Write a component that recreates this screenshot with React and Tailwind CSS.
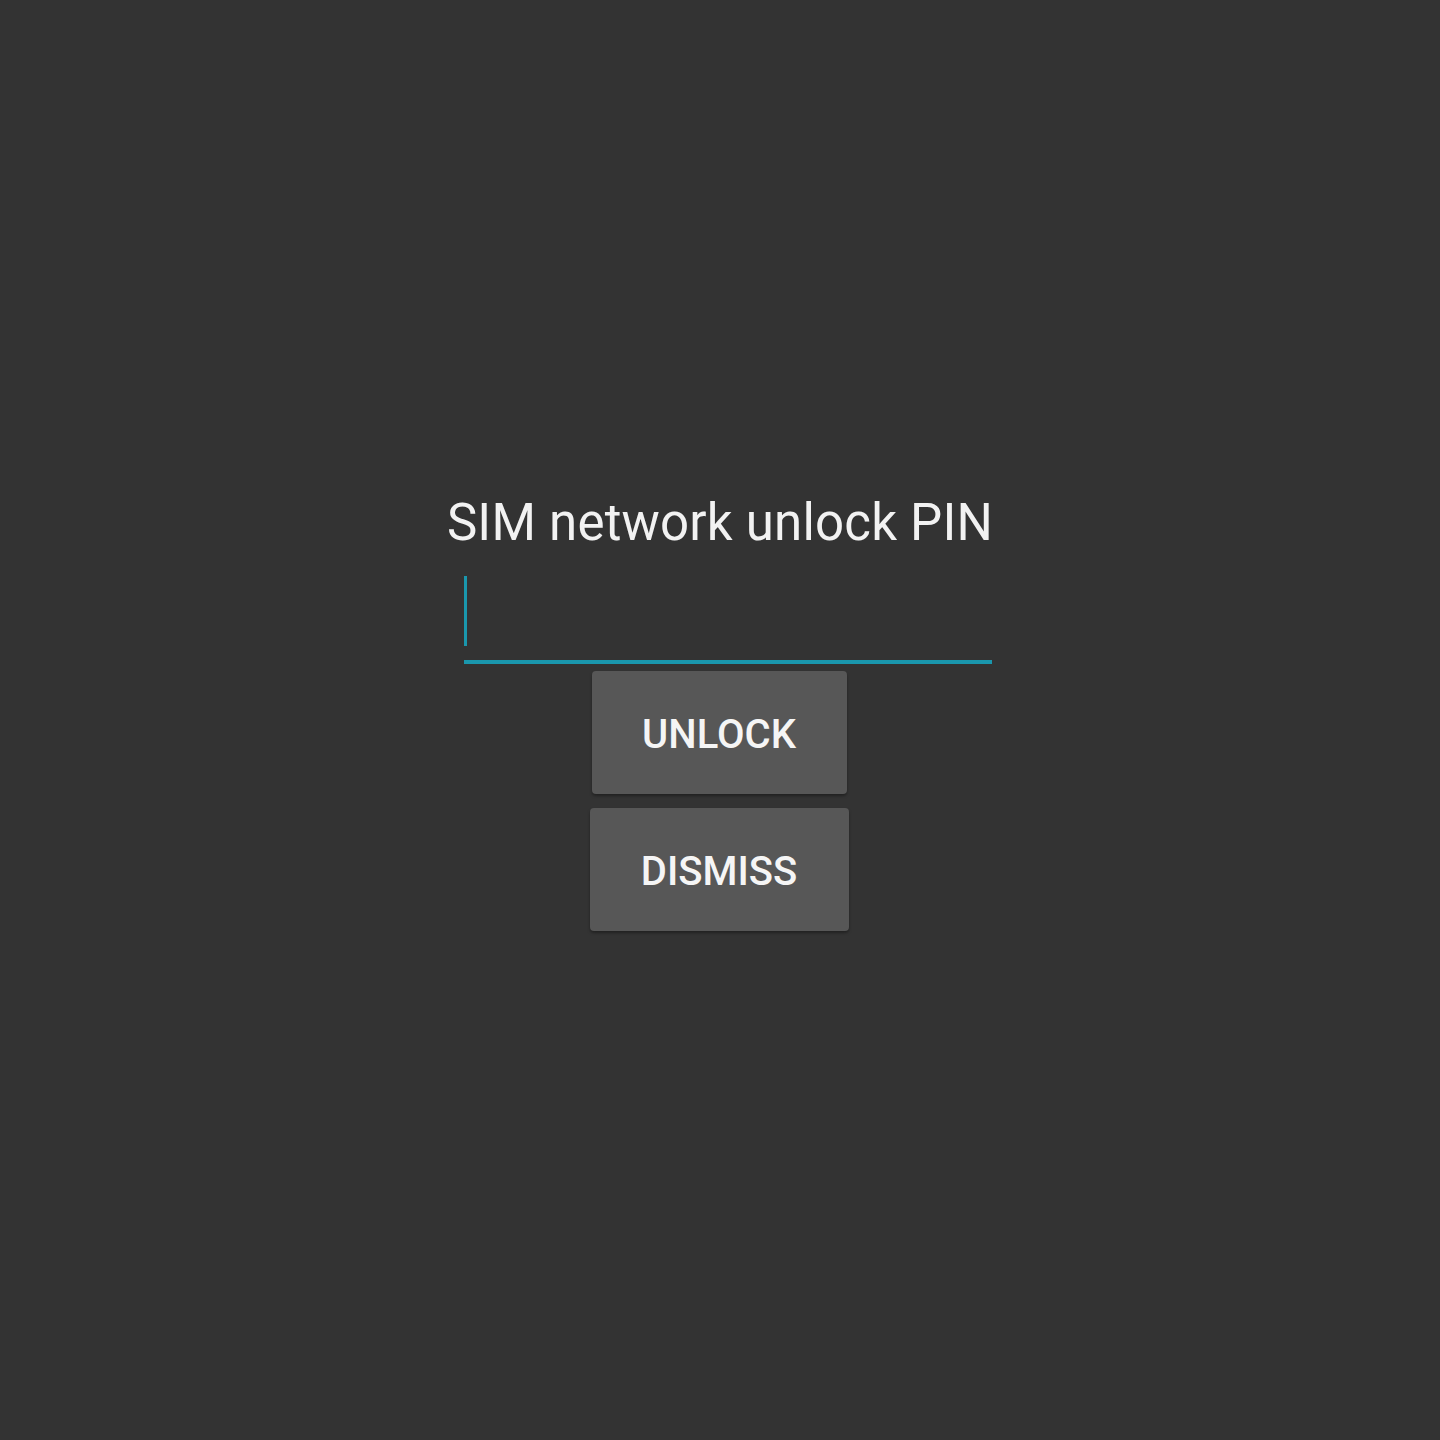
export default function App() {
  return (
    <div className="w-[1440px] h-[1440px] bg-[#333333] flex flex-col items-center" style={{ fontFamily: 'Roboto, "Noto Sans", sans-serif' }}>
      <div className="mt-[492px] text-[51px] leading-[62px] text-[#f2f2f2] tracking-[0.2px]">SIM network unlock PIN</div>
      <div className="mt-[22px] w-[528px] ml-[16px] h-[88px] border-b-[4px] border-[#1a97ad] relative">
        <div className="absolute left-0 top-0 w-[3px] h-[70px] bg-[#1a97ad]" />
      </div>
      <button className="mt-[7px] ml-[-2px] w-[255px] h-[123px] bg-[#575757] rounded-[4px] shadow-[0_2px_3px_rgba(0,0,0,0.35)] text-[40px] font-medium text-[#f5f5f5] pt-[4px]">
        UNLOCK
      </button>
      <button className="mt-[14px] ml-[-2px] w-[259px] h-[123px] bg-[#575757] rounded-[4px] shadow-[0_2px_3px_rgba(0,0,0,0.35)] text-[40px] font-medium text-[#f5f5f5] pt-[4px]">
        DISMISS
      </button>
    </div>
  );
}
